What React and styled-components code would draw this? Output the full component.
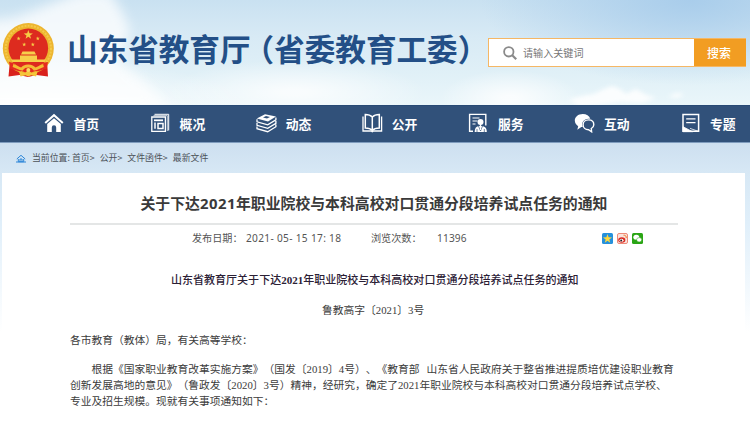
import React from "react";
import styled, { createGlobalStyle } from "styled-components";

const GlobalStyle = createGlobalStyle`
  *, *::before, *::after { box-sizing: border-box; }
  body {
    margin: 0;
    background: #fff;
    font-family: "Noto Sans CJK SC", sans-serif;
    text-spacing-trim: space-all;
    overflow: hidden;
  }
  h1, h2, p { margin: 0; }
`;

const Page = styled.div`
  width: 750px;
  height: 437px;
  overflow: hidden;
  display: flex;
  flex-direction: column;
  background: #fff;
`;

const Header = styled.header`
  position: relative;
  height: 105px;
  flex: none;
  display: flex;
  align-items: flex-start;
  background:
    radial-gradient(ellipse 210px 45px at 40px 105px, #ffffffd0 10%, #ffffff00 100%),
    radial-gradient(ellipse 130px 32px at 295px 92px, #ffffffc0 10%, #ffffff00 100%),
    radial-gradient(ellipse 70px 28px at 510px 98px, #ffffffc8 10%, #ffffff00 100%),
    radial-gradient(ellipse 210px 85px at 690px 0, #a9cdeb 0%, #a9cdeb00 100%),
    linear-gradient(180deg, #c9e1f1 0%, #d8eaf5 35%, #e0f0f7 70%, #eaf6fa 100%);
`;

const Clouds = styled.svg`
  position: absolute;
  left: 0;
  top: 0;
`;

const Emblem = styled.svg`
  position: relative;
  flex: none;
  margin: 22px 0 0 2px;
`;

const SiteName = styled.h1`
  position: relative;
  flex: none;
  width: 420px;
  margin: 26px 0 0 12px;
  font-size: 30.6px;
  line-height: 44px;
  font-weight: 700;
  color: #234f87;
  white-space: nowrap;
`;

const OpenParen = styled.span`
  margin-left: 8.3px;
  font-feature-settings: "halt";
`;

const SearchBox = styled.form`
  position: relative;
  display: flex;
  flex: none;
  width: 258px;
  height: 29px;
  margin-top: 38px;
  margin-left: 1px;
  border: 1px solid #f5b765;
  background: #fff;
`;

const SearchField = styled.label`
  flex: 1;
  display: flex;
  align-items: center;
  padding-left: 14px;
  gap: 6px;
  font-size: 10.1px;
  line-height: 27px;
  color: #777;
`;

const SearchButton = styled.button`
  width: 52px;
  margin: 0 -1px 0 0;
  padding: 0 2px 0 0;
  border: 0;
  background: #f29d22;
  color: #fff;
  font: 500 12px/27px "Noto Sans CJK SC", sans-serif;
`;

const Nav = styled.nav`
  height: 38px;
  flex: none;
  display: grid;
  grid-template-columns: repeat(7, 106.1px);
  padding-left: 44px;
  overflow: hidden;
  background: #31517a;
  border-top: 1px solid #284a75;
  border-bottom: 1px solid #7f9cbe;
`;

const NavItem = styled.a`
  display: flex;
  align-items: center;
  gap: 8.5px;
  height: 36px;
  color: #fff;
  font-size: 12.8px;
  line-height: 36px;
  font-weight: 700;
  white-space: nowrap;

  svg { position: relative; top: -1px; }
`;

const Backdrop = styled.main`
  flex: 1;
  padding: 0 5px 0 2px;
  background: linear-gradient(180deg, #cddff0 0, #d7e8f5 30px, #e0effa 80px, #fff 190px);
`;

const Breadcrumb = styled.div`
  height: 30px;
  display: flex;
  align-items: center;
  padding: 0 0 0 14px;
  font-size: 8.9px;
  line-height: 30px;
  color: #4c5259;
  white-space: pre;

  svg { margin-right: 6px; }
`;

const Crumb = styled.span`
  margin-right: ${(p) => p.$gap || 0}px;
`;

const Article = styled.article`
  height: 270px;
  padding: 18px 67px 0 68px;
  background: #fff;
  color: #333;
`;

const Title = styled.h1`
  height: 34px;
  border-bottom: 2px solid #e4e6e6;
  padding-left: 70.5px;
  font-size: 14.87px;
  line-height: 24px;
  font-weight: 700;
  color: #3a3a3a;
  white-space: nowrap;
`;

const TitleDigits = styled.span`
  font-family: "Noto Sans", sans-serif;
  letter-spacing: 0.5px;
`;

const Meta = styled.div`
  display: flex;
  align-items: center;
  height: 26px;
  padding-left: 122px;
  font: 10.15px/26px "Noto Sans", "Noto Sans CJK SC", sans-serif;
  color: #555;
  white-space: pre;
`;

const MetaText = styled.span`
  width: ${(p) => p.$w}px;
  letter-spacing: ${(p) => p.$ls || 0}px;
`;

const Share = styled.span`
  display: flex;
  gap: 4px;
`;

const SongText = styled.p`
  font-family: "Liberation Serif", "Noto Sans CJK SC", serif;
  font-size: 10.75px;
  line-height: 16px;
  color: #3c3c3c;
  white-space: pre;
  margin-top: ${(p) => p.$top || 0}px;
  padding-left: ${(p) => p.$indent || 0}px;
`;

const DocHeading = styled(SongText).attrs({ as: "h2" })`
  font-size: 11.02px;
  font-weight: 500;
  color: #2b2035;

  b { font-weight: 700; }
`;

const HalfGap = styled.span`
  display: inline-block;
  width: 7px;
`;

const NavIcon = ({ children }) => (
  <svg width="21" height="20" viewBox="0 0 21 20" fill="none" stroke="#fff" strokeWidth="1.3">
    {children}
  </svg>
);

const NAV = [
  ["首页", <><path d="M1.2 10 10 2.2 18.8 10" strokeWidth="2" /><path d="M3.2 10.900 10 5.200l6.800 5.700V19h-4.600v-4.600a2.200 2.200 0 0 0-4.400 0V19H3.200z" fill="#fff" stroke="none" /></>],
  ["概况", <><path d="M4.5 1.3h14.2v16.2" strokeWidth="1" /><path d="M3.5 2.6h13.8V18" strokeWidth=".7" /><path d="M1.8 4h13.6v14.3H1.8z" /><path d="M4 7.3h9" strokeWidth="1.8" /><path d="M5 9.5v6.3M8 10.5h5v5H8z" strokeWidth="1.5" /></>],
  ["动态", <><path d="M.8 5.5 9 1.2 20 3.5l-8 5z" fill="#fff" stroke="none" /><path d="m7 4.5 3-1.6 4 1-3 1.6z" fill="#31517a" stroke="none" /><path d="M1 6.3v2.5l10.700 3 8.200-5V4.500M1 10v2.300l10.700 3 8.200-5V8M1 13.500v2.200l10.700 3 8.200-5v-2.300" strokeWidth="1.300" /></>],
  ["公开", <><path d="M10.3 4C8 1.7 5.5 1.6 3.3 1.6V15c2.6 0 5 .3 7 2.5 2-2.2 4.4-2.5 7-2.5V1.600c-2.200 0-4.700.1-7 2.400zV17" strokeWidth="1.500" /><path d="M1 3.6V18h8l1.300.8 1.300-.8h8V3.600" strokeWidth="1.300" /></>],
  ["服务", <><path d="M5 18.3H1.6V1.4h16.2v11" strokeWidth="1.4" /><path d="M4.5 5h7M4.5 8h5M4.5 11h3" strokeWidth="1.2" /><circle cx="12.5" cy="9" r="3" fill="#fff" stroke="none" /><path d="M6.700 19c0-4.500 2-6 5.800-6s6.300 1.500 6.300 6z" fill="#fff" stroke="none" /><path d="m10.5 13 2 5 2-5M9 16v3M16.300 16v3" stroke="#31517a" strokeWidth=".7" /><path d="M12.5 11v6" /></>],
  ["互动", <><path d="M8.8 1C4.1 1 .8 3.900.8 7.600c0 2.500 1.400 4.400 3.400 5.600l-.9 3.500 4-2.600h1.400c-2-4.900 1.800-9.300 7.600-8.300C15.300 2.900 12.500 1 8.800 1z" fill="#fff" stroke="none" /><path d="M14.500 6.900c-3.200 0-5.400 2-5.400 4.800s2.200 5 5.400 5l3.100 2.100-.3-3.300c1.600-.9 2.500-2.200 2.500-3.800 0-2.800-2.100-4.800-5.300-4.800z" strokeWidth="1.400" /></>],
  ["专题", <><path d="M2 1.5h15.600v16.800H2z" strokeWidth="1.500" /><path d="M5.200 5.800h9.300M5.200 9.600h9.300" strokeWidth="1.300" /><path d="M2 13.700 11.500 18.700H2zM9 15.400l8 2.800" fill="#fff" stroke="#fff" strokeWidth=".8" /></>],
];

const star = "M0-5 1.2-1.6 4.8-1.5 1.9.7 2.9 4.1 0 2.1-2.9 4.1-1.9.7-4.8-1.5-1.2-1.6z";

const NationalEmblem = () => (
  <Emblem width="53" height="56" viewBox="0 0 53 56">
    <path d="M8 38 6.500 54.500l11-1.500L26 55l8.500-2 11.500 1.500L45 38z" fill="#d9201c" />
    <circle cx="26.3" cy="26.5" r="25.500" fill="#edb52f" />
    <circle cx="26.3" cy="26.5" r="22.700" fill="none" stroke="#f4c94b" strokeWidth="2" strokeDasharray="2 1.2" />
    <circle cx="26.3" cy="26.2" r="19.800" fill="#dd2b1f" />
    <path d={star} transform="translate(26.3 12.8) scale(.95)" fill="#f6cc45" />
    <g fill="#f6cc45">
      <path d={star} transform="translate(16.6 16.5) scale(.42)" />
      <path d={star} transform="translate(35.8 16.5) scale(.42)" />
      <path d={star} transform="translate(22.2 22.5) scale(.42)" />
      <path d={star} transform="translate(30.8 22.5) scale(.42)" />
    </g>
    <path d="M19 32.500 20.500 29.500h12l1.500 3zM18 33.500h17v4H18zM9 37.500h35L42.500 40h-32z" fill="#f7cf4b" />
    <path d="M10 40h33l-7 5H17z" fill="#dd2b1f" />
    <path d="M7 40c5 0 8 5 13 5 2-4 10.500-4 12.500 0C37.500 45 41 40 46 40l-1.500 7c-4 0-7 3-11 2l-7 2.500-7-2.500c-4 1-7-2-11-2z" fill="#e52b20" />
    <path d="M11 43.500c4 1 6 3.500 9 3.500 2.500-4 10-4 12.500 0 3 0 5-2.500 9-3.500" fill="none" stroke="#f3bd35" strokeWidth="3" />
    <path d="M17 49.500 23 51l3.300-3 3.300 3 6-1.500-1.500 5-5-1.300-2.800 1.300-2.800-1.300-5 1.300z" fill="#f5c53a" />
    <circle cx="26.300" cy="48" r="2" fill="#f9da66" />
  </Emblem>
);

const App = () => (
  <>
    <GlobalStyle />
    <Page>
      <Header>
        <Clouds width="750" height="105" viewBox="0 0 750 105">
          <defs>
            <filter id="soft" x="-20%" y="-50%" width="140%" height="200%"><feGaussianBlur stdDeviation="2" /></filter>
            <filter id="wide" x="-30%" y="-50%" width="160%" height="200%"><feGaussianBlur stdDeviation="6" /></filter>
          </defs>
          <path d="M-20 22 15 18 45 6 80-8h30l12 20 8 18-12 30 25 20 30 30H-20z" fill="#fff" opacity=".75" filter="url(#wide)" />
          <path d="M568 100l14-4 12-2 10-5 8-3 8 3 6 5 10-5 10 6 10 3-14 5-22-1-20 3-20 2zM668 97l8-4 8 1-6 4z" fill="#fff" opacity=".85" filter="url(#soft)" />
        </Clouds>
        <NationalEmblem />
        <SiteName>山东省教育厅<OpenParen>（</OpenParen>省委教育工委）</SiteName>
        <SearchBox>
          <SearchField>
            <svg width="14" height="14" viewBox="0 0 14 14" fill="none" stroke="#8a8a8a" strokeWidth="1.8">
              <circle cx="5.800" cy="5.800" r="4.700" /><path d="m9.200 9.200 4 4" strokeWidth="2.200" />
            </svg>
            请输入关键词
          </SearchField>
          <SearchButton type="button">搜索</SearchButton>
        </SearchBox>
      </Header>
      <Nav>
        {NAV.map(([label, icon]) => (
          <NavItem key={label}><NavIcon>{icon}</NavIcon><span>{label}</span></NavItem>
        ))}
      </Nav>
      <Backdrop>
        <Breadcrumb>
          <svg width="10" height="9" viewBox="0 0 10 9" fill="none" stroke="#2d86d8" strokeWidth="1">
            <path d="M.8 5 5 1.300 9.200 5M2.300 5v2.700h5.400V5M0 8h10" /><path d="M4 7.500V5h2v2.500" />
          </svg>
          <Crumb $gap={2}>当前位置:</Crumb>
          <Crumb $gap={5}>首页&gt;</Crumb>
          <Crumb $gap={5}>公开&gt;</Crumb>
          <Crumb $gap={5}>文件函件&gt;</Crumb>
          <Crumb>最新文件</Crumb>
        </Breadcrumb>
        <Article>
          <Title>关于下达<TitleDigits>2021</TitleDigits>年职业院校与本科高校对口贯通分段培养试点任务的通知</Title>
          <Meta>
            <MetaText $w={54}>发布日期：</MetaText>
            <MetaText $w={125} $ls={0.32}>2021- 05- 15 17: 18</MetaText>
            <MetaText $w={66}>浏览次数：</MetaText>
            <MetaText $w={165} $ls={0.15}>11396</MetaText>
            <Share>
              <svg width="11" height="11" viewBox="0 0 11 11">
                <rect width="11" height="11" rx="1.500" fill="#2590dc" />
                <path d={star} transform="translate(5.500 5.800) scale(.95)" fill="#ffd83b" />
              </svg>
              <svg width="11" height="11" viewBox="0 0 11 11">
                <rect x=".5" y=".5" width="10" height="10" rx="1.500" fill="#fbe3dc" stroke="#ee8a78" />
                <ellipse cx="4.800" cy="7" rx="3.600" ry="2.700" fill="#d92a22" />
                <ellipse cx="4.500" cy="7.300" rx="2" ry="1.500" fill="#fff" />
                <circle cx="4.200" cy="7.500" r="1" fill="#222" />
                <path d="M6.500 2.200c2-.2 3 1 2.700 2.900" fill="none" stroke="#ef7c25" />
              </svg>
              <svg width="11" height="11" viewBox="0 0 11 11">
                <rect width="11" height="11" rx="1.500" fill="#2aa515" />
                <ellipse cx="4.300" cy="4.300" rx="3" ry="2.500" fill="#fff" />
                <ellipse cx="7.200" cy="6.800" rx="2.600" ry="2.200" fill="#fff" stroke="#2aa515" strokeWidth=".5" />
              </svg>
            </Share>
          </Meta>
          <DocHeading $top={21} $indent={101}>山东省教育厅关于下达<b>2021</b>年职业院校与本科高校对口贯通分段培养试点任务的通知</DocHeading>
          <SongText $top={14} $indent={252}>鲁教高字〔2021〕3号</SongText>
          <SongText $top={14}>各市教育（教体）局，有关高等学校：</SongText>
          <SongText $top={13} $indent={21.5}>根据《国家职业教育改革实施方案》（国发〔2019〕4号）、《教育部<HalfGap />山东省人民政府关于整省推进提质培优建设职业教育</SongText>
          <SongText>创新发展高地的意见》（鲁政发〔2020〕3号）精神，经研究，确定了2021年职业院校与本科高校对口贯通分段培养试点学校、</SongText>
          <SongText>专业及招生规模。现就有关事项通知如下：</SongText>
        </Article>
      </Backdrop>
    </Page>
  </>
);

export default App;
